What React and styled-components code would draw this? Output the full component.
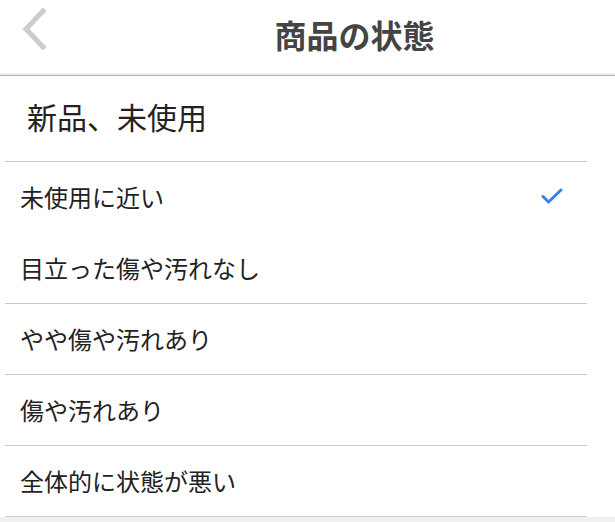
import React from 'react';
import styled, { createGlobalStyle } from 'styled-components';

const conditions = [
  { label: '未使用に近い', checked: true, line: false },
  { label: '目立った傷や汚れなし', line: true },
  { label: 'やや傷や汚れあり', line: true },
  { label: '傷や汚れあり', line: true },
  { label: '全体的に状態が悪い', line: true },
];

const App = () => {
  return (
    <>
      <GlobalStyle />
      <Page>
        <Header>
          <Back aria-label="戻る">
            <svg width="26" height="42" viewBox="0 0 26 42">
              <path d="M22 3 L5 21 L22 39" fill="none" stroke="#cccccc" strokeWidth="5" strokeLinecap="square" />
            </svg>
          </Back>
          <Title>商品の状態</Title>
        </Header>
        <Section>
          <SectionTitle>新品、未使用</SectionTitle>
        </Section>
        <List>
          {conditions.map((item) => (
            <Row key={item.label} $line={item.line}>
              <Label>{item.label}</Label>
              {item.checked && (
                <Check width="22" height="16" viewBox="0 0 22 16">
                  <path d="M2 8.5 L7.5 14 L20 2" fill="none" stroke="#3a7ff0" strokeWidth="3" strokeLinecap="round" strokeLinejoin="round" />
                </Check>
              )}
            </Row>
          ))}
        </List>
      </Page>
    </>
  );
};

export default App;

const GlobalStyle = createGlobalStyle`
  body {
    margin: 0;
    background: #f0f0f0;
    font-family: "Noto Sans CJK JP", "Noto Sans", sans-serif;
  }
`;

const Page = styled.div`
  background: #fff;
  width: 615px;
`;

const Header = styled.header`
  height: 73px;
  display: flex;
  align-items: center;
  justify-content: center;
  padding-left: 94px;
  position: relative;
  border-bottom: 2px solid #ececec;
  box-shadow: 0 1px 0 #b4b4b4;
  margin-bottom: 1px;
`;

const Back = styled.div`
  position: absolute;
  left: 21px;
  top: 8px;
  width: 26px;
  height: 42px;
`;

const Title = styled.h1`
  margin: 0;
  font-size: 32px;
  font-weight: 700;
  color: #444;
  line-height: 1;
  margin-top: -6px;
`;

const Section = styled.div`
  height: 85px;
  display: flex;
  align-items: center;
  padding-left: 27px;
`;

const SectionTitle = styled.div`
  font-size: 30px;
  color: #222;
  line-height: 1;
  margin-top: -5px;
`;

const List = styled.div`
  margin-left: 5px;
  width: 582px;
  border-top: 1px solid #cccccc;
`;

const Row = styled.div`
  height: 70px;
  display: flex;
  align-items: center;
  justify-content: space-between;
  padding: 0 24px 0 15px;
  border-bottom: 1px solid ${(p) => (p.$line ? '#cccccc' : 'transparent')};
`;

const Label = styled.span`
  font-size: 24px;
  color: #222;
  line-height: 1;
`;

const Check = styled.svg`
  display: block;
  margin-top: -2px;
`;
